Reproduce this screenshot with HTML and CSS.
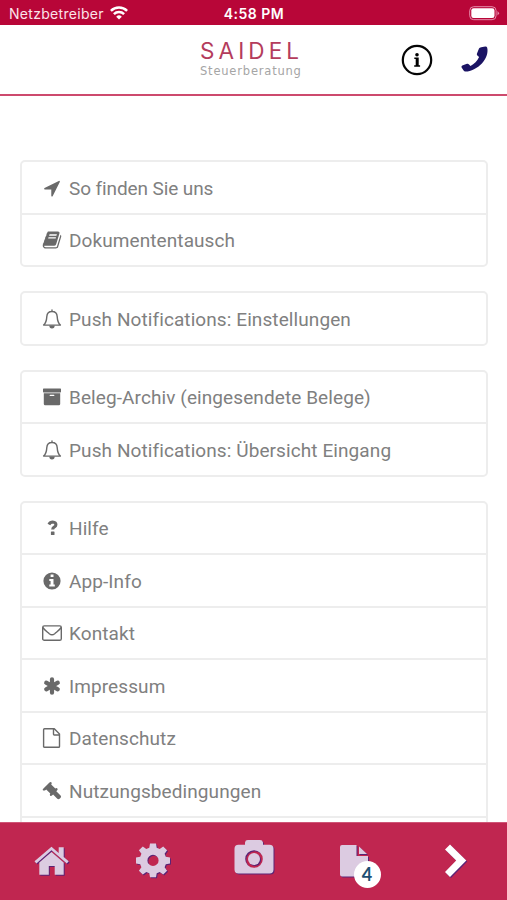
FILE: index.html
```html
<!DOCTYPE html>
<html lang="de">
<head>
<meta charset="utf-8">
<title>Saidel Steuerberatung</title>
<link rel="stylesheet" href="styles.css">
</head>
<body>
<svg class="defs" width="0" height="0">
  <symbol id="bell" viewBox="0 0 20 20"><path d="M10 2.200V1M1.600 16.100C4 14 4.600 11.500 4.800 7.600 5 4.400 7 2.500 10 2.500s5 1.900 5.200 5.100c.2 3.900.8 6.400 3.200 8.500z" fill="none" stroke="currentColor" stroke-width="1.400" stroke-linecap="round" stroke-linejoin="round"/><path d="M7.300 16.500h5.400a2.700 2.900 0 0 1-5.400 0z" fill="currentColor"/></symbol>
</svg>
<div class="app">
  <div class="status">
    <div class="carrier"><span>Netzbetreiber</span>
      <svg width="18" height="14" viewBox="0 0 18 14" fill="none" stroke="#fff" stroke-width="2.500"><path d="M.9 4.900a11.500 11.500 0 0 1 16.200 0M3.900 8.200a7.300 7.300 0 0 1 10.200 0"/><path d="M9 13.500 6.200 10.700a4 4 0 0 1 5.600 0z" fill="#fff" stroke="none"/></svg>
    </div>
    <div class="time">4:58 PM</div>
    <svg class="battery" width="31" height="15" viewBox="0 0 31 15"><rect x=".7" y=".7" width="26.400" height="13" rx="4" fill="none" stroke="#e58cab" stroke-width="1"/><rect x="2.300" y="2.300" width="23.200" height="9.800" rx="2.300" fill="#fff"/><path d="M28.500 5v4.500q3-2.200 0-4.500z" fill="#e58cab"/></svg>
  </div>
  <header class="header">
    <div class="logo"><div class="brand">SAIDEL</div><div class="sub">Steuerberatung</div></div>
    <div class="actions">
      <svg width="32" height="32" viewBox="0 0 32 32"><circle cx="16" cy="16" r="14.200" fill="none" stroke="#050505" stroke-width="2.200"/><circle cx="16" cy="10.700" r="1.800"/><path d="M13.300 13.600h4.400v7.700h1.400v1.500h-5.900v-1.500h1.500v-6.200h-1.400z"/></svg>
      <svg width="28" height="28" viewBox="0 0 28 28"><path fill="#1b1464" d="M20.200 1.200 24.300.6q1.500-.1 1.900 1.200c1.100 4.500-.5 10.400-5.100 15.500-4.800 5.200-11.900 8.500-16.700 8.300q-1.300-.2-1.800-1.200L.6 21.500q-.5-1.400.7-2l4.700-1.700q1.300-.3 2 .7l1.500 1.400c3.700-1.800 6.900-5 8.600-8.900l-1.500-1.300q-1.100-.8-.7-1.900l2.100-5.400q.5-1 2.200-1.200z"/></svg>
    </div>
  </header>
  <main class="content">
    <ul class="group">
      <li><svg class="ic" viewBox="0 0 1792 1792"><path d="M1593 349l-640 1280q-17 35-57 35-5 0-15-2-22-5-35.500-22.500t-13.500-39.500v-576h-576q-22 0-39.500-13.500t-22.500-35.500 4-42 29-30l1280-640q13-7 29-7 27 0 45 19 15 14 18.500 34.500t-6.500 39.500z"/></svg><span class="w-find">So finden Sie uns</span></li>
      <li><svg class="ic" viewBox="0 0 1792 1792"><path d="M1703 478q40 57 18 129l-275 906q-19 64-76.500 107.500t-122.500 43.500h-923q-77 0-148.500-53.500t-99.500-131.500q-24-67-2-127 0-4 3-27t4-37q1-8-3-21.500t-3-19.500q2-11 8-21t16.500-23.500 16.500-23.500q23-38 45-91.500t30-91.500q3-10 .5-30t-.5-28q3-11 17-28t17-23q21-36 42-92t25-90q1-9-2.500-32t.5-28q4-13 22-30.500t22-22.500q19-26 42.500-84.500t27.500-96.500q1-8-3-25.500t-2-26.500q2-8 9-18t18-23 17-21q8-12 16.500-30.500t15-35 16-36 19.500-32 26.500-23.500 36-11.500 47.500 5.500l-1 3q38-9 51-9h761q74 0 114 56t18 130l-274 906q-36 119-71.500 153.500t-128.500 34.500h-869q-27 0-38 15-11 16-1 43 24 70 144 70h923q29 0 56-15.500t35-41.500l300-987q7-22 5-57 38 15 59 43zm-1064 2q-4 13 2 22.500t20 9.500h608q13 0 25.500-9.500t16.500-22.500l21-64q4-13-2-22.500t-20-9.500h-608q-13 0-25.500 9.500t-16.500 22.500zm-83 256q-4 13 2 22.500t20 9.500h608q13 0 25.500-9.500t16.500-22.500l21-64q4-13-2-22.500t-20-9.500h-608q-13 0-25.500 9.500t-16.500 22.500z"/></svg><span>Dokumententausch</span></li>
    </ul>
    <ul class="group">
      <li><svg class="ic"><use href="#bell"/></svg><span>Push Notifications: Einstellungen</span></li>
    </ul>
    <ul class="group">
      <li><svg class="ic" viewBox="0 0 20 20"><path d="M1.600 1.500h16.800q.6 0 .6.600v2.700q0 .6-.6.600H1.600Q1 5.400 1 4.800V2.100q0-.6.600-.6z"/><path fill-rule="evenodd" d="M1.800 6.300h16.400v10.800q0 1.100-1 1.100H2.800q-1 0-1-1.100zM8.300 7.700a.7.700 0 0 0 0 1.400h3.400a.7.700 0 0 0 0-1.400z"/></svg><span>Beleg-Archiv (eingesendete Belege)</span></li>
      <li><svg class="ic"><use href="#bell"/></svg><span>Push Notifications: Übersicht Eingang</span></li>
    </ul>
    <ul class="group">
      <li><svg class="ic" viewBox="0 0 20 20"><path d="M6.900 6.400Q8.200 4 10.700 4q3.200.2 3.200 2.700 0 1.300-1.500 2.200-1.700.9-1.700 2.500" fill="none" stroke="currentColor" stroke-width="3.100"/><rect x="8.900" y="13.400" width="3.600" height="3.600" rx=".6"/></svg><span>Hilfe</span></li>
      <li><svg class="ic" viewBox="0 0 20 20"><path fill-rule="evenodd" d="M10 1.400a8.600 8.600 0 1 0 0 17.200 8.600 8.600 0 0 0 0-17.200zM8.600 3.600h2.900v2.300H8.600zM7.300 7.900h4.200v5.600h1.300v2H7.300v-2h1.300v-3.600H7.300z"/></svg><span>App-Info</span></li>
      <li><svg class="ic" viewBox="0 0 20 20"><g fill="none" stroke="currentColor" stroke-width="1.400" stroke-linejoin="round"><rect x=".7" y="2.900" width="18.600" height="14.400" rx="1.600"/><path d="M.8 4.500C2.400 7 5 8.700 7.300 10.700q2.700 2.200 5.400 0C15 8.700 17.600 7 19.200 4.500"/></g></svg><span>Kontakt</span></li>
      <li><svg class="ic" viewBox="0 0 20 20"><path d="M10 3.300v13.400M4.200 6.700l11.600 6.600M15.800 6.700 4.200 13.300" stroke="currentColor" stroke-width="4.200" stroke-linecap="round"/></svg><span>Impressum</span></li>
      <li><svg class="ic" viewBox="0 0 20 20"><path d="M2.500.8h9.800l5.200 5.300v12.300q0 .9-.9.900H2.500q-.9 0-.9-.9V1.700q0-.9.900-.9zM11.500 1v5.300q0 .7.700.7h5.200" fill="none" stroke="currentColor" stroke-width="1.400" stroke-linejoin="round"/></svg><span>Datenschutz</span></li>
      <li><svg class="ic" viewBox="0 0 20 20"><path d="M.9 9.300Q.3 8.400 1.200 7.700L7.500 1.400Q8.400.6 9.300 1.300q.8.800.2 1.700L9.200 3.500l4.100 4.100.5-.3q.9-.5 1.600.3.600.9-.2 1.700l-.9.900 4.300 4.200q1 1.100 0 2.300l-1 1q-1.200.9-2.300 0l-4.200-4.300-1.100 1.200q-1 .8-1.800.1-.7-.8-.2-1.600l.3-.5-4.100-4.100-.5.600Q1.700 10 .9 9.300z"/></svg><span>Nutzungsbedingungen</span></li>
      <li></li>
    </ul>
  </main>
  <nav class="tabs">
    <svg class="tab" viewBox="0 0 40 40"><path d="M2.500 21.200 19.500 6.800l7.200 6.100V7.200h5v9.900l5 4.100-1.900 2.200L19.500 10.300 4.400 23.400z"/><path d="M7.300 22.500 19.500 12l12.200 10.500v12.300h-9v-8.700h-5.900v8.700H7.300z"/></svg>
    <svg class="tab" viewBox="0 0 40 40"><path fill-rule="evenodd" d="M17 3.500h6l.7 4.200 3 1.200L30.200 6.400l3.900 3.900-2.500 3.500 1.200 3 4.200.7v6l-4.200.7-1.200 3 2.500 3.500-3.900 3.900-3.500-2.500-3 1.200-.7 4h-6l-.7-4-3-1.200-3.500 2.500-3.900-3.900 2.500-3.500-1.200-3L3 23.500v-6l4.200-.7 1.200-3-2.500-3.500 3.900-3.900 3.500 2.500 3-1.200zM20 14.800a5.600 5.600 0 1 0 0 11.200 5.600 5.600 0 0 0 0-11.200z"/></svg>
    <svg class="tab" viewBox="0 0 40 40"><path fill-rule="evenodd" d="M4.500 4.700H11V2.500Q11.300.1 13.800.1H26q2.500 0 3 2.400v2.200h6.500q4 .2 4 4v20.800q0 4-4 4h-31q-4 0-4-4V8.700q0-3.800 4-4zM20 10.200a8.800 8.800 0 1 0 0 17.600 8.800 8.800 0 0 0 0-17.600z"/><circle cx="20" cy="19" r="6"/></svg>
    <div class="docs"><svg class="tab" viewBox="0 0 40 40"><path d="M7 5h14.500v11H33v18.500q0 2-2 2H7q-2 0-2-2V7q0-2 2-2z"/><path d="M24 6.500V14h8z"/></svg><span class="badge">4</span></div>
    <svg class="tab next" viewBox="0 0 40 40"><path d="m9 9.600 5-5.200L30.300 20.500 14 37l-5-4.900L20.200 20.500z"/></svg>
  </nav>
</div>
</body>
</html>
```
FILE: styles.css
```css
* { box-sizing: border-box; }
body { margin: 0; background: #fff; font-family: Roboto, "Liberation Sans", sans-serif; }
.defs { position: absolute; }
.app { width: 507px; height: 900px; display: flex; flex-direction: column; overflow: hidden; }
.status { flex: none; height: 25px; padding: 2px 7px 0 9px; background: #b80638; color: #fff; display: grid; grid-template-columns: 1fr auto 1fr; align-items: center; font: 14px Inter, sans-serif; }
.carrier { display: flex; align-items: center; gap: 6px; letter-spacing: .3px; color: #fbe3ea; }
.carrier svg { margin-top: -2px; }
.time { font-weight: 600; font-size: 14px; letter-spacing: .5px; margin-right: 1px; }
.battery { justify-self: end; }
.header { flex: none; height: 71px; border-bottom: 2px solid #cd4a6d; display: grid; grid-template-columns: 1fr auto 1fr; align-items: center; padding: 0 18px 0 14px; }
.logo { grid-column: 2; width: 103px; white-space: nowrap; margin-top: -2px; }
.brand { font: 22.500px/22px Inter, sans-serif; letter-spacing: 4.100px; color: #b43c5c; }
.sub { font: 11.500px/14px "DejaVu Sans", sans-serif; letter-spacing: .8px; color: #a5a5a5; margin-top: 2px; }
.actions { justify-self: end; display: flex; align-items: center; gap: 28px; margin-top: 1px; }
.content { flex: 1; min-height: 0; overflow: hidden; padding: 64px 19px 0 20px; }
.group { list-style: none; margin: 0 0 24px; padding: 0; border: 2px solid #ededed; border-radius: 5px; }
.group li { height: 52.500px; border-bottom: 2px solid #ededed; display: flex; align-items: center; gap: 7px; padding: 1px 0 0 20px; color: #808080; font-size: 19px; line-height: 24px; letter-spacing: .09px; white-space: nowrap; }
.group li:last-child { height: 50.500px; border-bottom: 0; }
.group span { margin-top: 2px; }
.w-find { letter-spacing: -.1px; }
.ic { width: 20px; height: 20px; flex: none; fill: currentColor; color: #696969; }
.tabs { flex: none; height: 78.500px; background: #c02650; border-top: 1px solid #cf5576; display: flex; justify-content: space-between; padding: 17.500px 31px 0 32px; }
.tab { width: 40px; height: 40px; display: block; fill: #dccbe1; filter: drop-shadow(1.500px 1.500px 0 #5b2375); }
.docs { position: relative; }
.badge { position: absolute; left: 18.500px; top: 20.500px; width: 27px; height: 27px; border-radius: 50%; background: #fff; color: #1d4f73; display: flex; align-items: center; justify-content: center; font: bold 18px Lato, sans-serif; }
.tab.next { fill: #fff; }
```
